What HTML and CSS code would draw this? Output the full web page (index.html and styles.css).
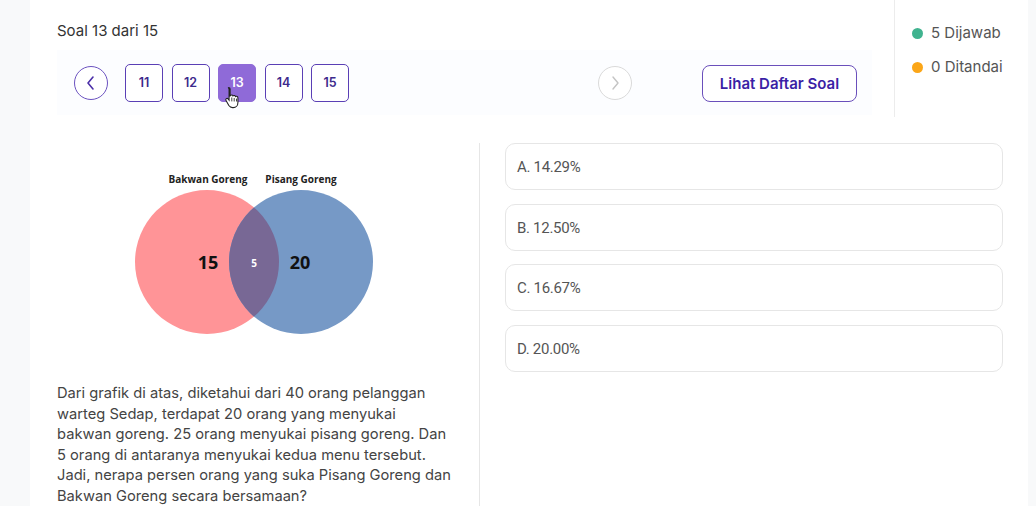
FILE: index.html
```html
<!DOCTYPE html>
<html lang="id">
<head>
<meta charset="utf-8">
<link rel="stylesheet" href="styles.css">
</head>
<body>
<div class="page">
  <div class="top">
    <div class="top-left">
      <div class="title">Soal 13 dari 15</div>
      <div class="pager">
        <button class="circ prev"><svg width="14" height="16" viewBox="0 0 14 16"><path d="M9 2 L4 8 L9 14" fill="none" stroke="#4b2fa8" stroke-width="1.6" stroke-linecap="round" stroke-linejoin="round"/></svg></button>
        <div class="pages">
          <button class="pg">11</button>
          <button class="pg">12</button>
          <button class="pg active">13</button>
          <button class="pg">14</button>
          <button class="pg">15</button>
        </div>
        <button class="circ next"><svg width="14" height="16" viewBox="0 0 14 16"><path d="M5 2 L10 8 L5 14" fill="none" stroke="#c4c4c4" stroke-width="1.4" stroke-linecap="round" stroke-linejoin="round"/></svg></button>
        <button class="list">Lihat Daftar Soal</button>
        <svg class="cursor" width="18" height="24" viewBox="0 0 16 22"><path d="M4 1.5c.8 0 1.4.6 1.4 1.4v6.2l.2-.1c.3-.6 1-.9 1.6-.7.4.1.7.4.8.8.4-.4 1-.5 1.5-.3.4.2.6.5.7.9.4-.3.9-.4 1.4-.2.6.2.9.8.9 1.4v4.2c0 2.6-1.8 4.7-4.3 4.7H7.6c-1.4 0-2.6-.7-3.4-1.9L1.6 13.3c-.4-.6-.2-1.3.3-1.7.5-.3 1.2-.2 1.6.3l.9 1.1V2.9C4.4 2.1 3.2 1.5 4 1.5z" fill="#fff" stroke="#222" stroke-width="1"/><path d="M6.9 10.5v3.6M9.1 11v3.2M11.2 11.6v2.6" stroke="#222" stroke-width=".8"/></svg>
      </div>
    </div>
    <div class="legend">
      <div class="lg"><span class="dot green"></span>5 Dijawab</div>
      <div class="lg"><span class="dot orange"></span>0 Ditandai</div>
    </div>
  </div>
  <div class="content">
    <div class="question">
      <svg class="venn" width="400" height="200" viewBox="0 0 400 200">
        <defs>
          <clipPath id="redclip"><circle cx="150" cy="112" r="72"/></clipPath>
        </defs>
        <text x="151" y="33" class="vlabel" text-anchor="middle">Bakwan Goreng</text>
        <text x="244" y="33" class="vlabel" text-anchor="middle">Pisang Goreng</text>
        <circle cx="150" cy="112" r="72" fill="#ff9497"/>
        <circle cx="244" cy="112" r="72" fill="#7699c6"/>
        <circle cx="244" cy="112" r="72" fill="#786895" clip-path="url(#redclip)"/>
        <text x="151" y="119" class="vnum" text-anchor="middle">15</text>
        <text x="197" y="117" class="vsmall" text-anchor="middle">5</text>
        <text x="243" y="119" class="vnum" text-anchor="middle">20</text>
      </svg>
      <p class="qtext">Dari grafik di atas, diketahui dari 40 orang pelanggan warteg Sedap, terdapat 20 orang yang menyukai bakwan goreng. 25 orang menyukai pisang goreng. Dan 5 orang di antaranya menyukai kedua menu tersebut. Jadi, nerapa persen orang yang suka Pisang Goreng dan Bakwan Goreng secara bersamaan?</p>
    </div>
    <div class="options">
      <div class="opt">A. 14.29%</div>
      <div class="opt">B. 12.50%</div>
      <div class="opt">C. 16.67%</div>
      <div class="opt">D. 20.00%</div>
    </div>
  </div>
</div>
</body>
</html>
```

FILE: styles.css
```css
* { box-sizing: border-box; }
html, body { margin: 0; padding: 0; }
body {
  background: #f8f9fa;
  font-family: Inter, "Noto Sans", sans-serif;
  height: 506px;
  overflow: hidden;
}
.page {
  margin-left: 30px;
  width: 998px;
  height: 506px;
  background: #fff;
}
.top {
  display: flex;
  height: 117px;
}
.top-left {
  width: 865px;
  border-right: 1px solid #ececec;
  padding-left: 27px;
  padding-top: 22px;
}
.title {
  font-size: 15px;
  color: #333;
  line-height: 18px;
}
.pager {
  position: relative;
  margin-top: 10px;
  width: 815px;
  height: 65px;
  background: #fcfdff;
  display: flex;
  align-items: center;
  padding-left: 17px;
}
button {
  font-family: inherit;
  cursor: pointer;
  padding: 0;
}
.circ {
  width: 34px;
  height: 34px;
  border-radius: 50%;
  background: #fff;
  display: flex;
  align-items: center;
  justify-content: center;
}
.prev { border: 1.5px solid #6b52c0; }
.next { border: 1.5px solid #dadada; margin-left: 249px; }
.pages {
  display: flex;
  gap: 8.5px;
  margin-left: 17px;
}
.pg {
  width: 38px;
  height: 38px;
  border: 1.5px solid #5a3fb5;
  border-radius: 5px;
  background: #fff;
  color: #3d2a8c;
  font-size: 12.5px;
  font-weight: 600;
}
.pg.active {
  background: #8f6ad8;
  border-color: #8f6ad8;
  color: #fff;
}
.list {
  margin-left: 70px;
  width: 155px;
  height: 37px;
  border: 1.5px solid #6a4fbb;
  border-radius: 8px;
  background: #fff;
  color: #3b1fa6;
  font-size: 15px;
  font-weight: 600;
  margin-top: 2px;
}
.cursor {
  position: absolute;
  left: 167px;
  top: 36px;
}
.legend {
  padding-left: 17px;
  padding-top: 24px;
  display: flex;
  flex-direction: column;
  gap: 16px;
}
.lg {
  display: flex;
  align-items: center;
  font-size: 15px;
  color: #555;
  line-height: 18px;
}
.dot {
  width: 11px;
  height: 11px;
  border-radius: 50%;
  margin-right: 8px;
}
.green { background: #40b38f; }
.orange { background: #fba618; }
.content {
  display: flex;
  margin-top: 26px;
}
.question {
  width: 450px;
  border-right: 1px solid #e6e6e6;
  height: 363px;
  padding-left: 27px;
}
.venn {
  display: block;
  margin-top: 7px;
}
.vlabel {
  font-family: "Open Sans", sans-serif;
  font-size: 10px;
  font-weight: 700;
  fill: #222;
}
.vnum {
  font-family: "Open Sans", sans-serif;
  font-size: 18px;
  font-weight: 700;
  fill: #111;
}
.vsmall {
  font-family: "Open Sans", sans-serif;
  font-size: 10px;
  font-weight: 700;
  fill: #fff;
}
.qtext {
  margin: 33px 0 0 0;
  width: 396px;
  font-size: 14.7px;
  line-height: 20.6px;
  color: #444;
}
.options {
  flex: 1;
  padding-left: 25px;
  padding-right: 25px;
  display: flex;
  flex-direction: column;
  gap: 13.5px;
}
.opt {
  height: 47px;
  border: 1px solid #e6e6e6;
  border-radius: 10px;
  padding-left: 11px;
  padding-top: 14px;
  font-family: Roboto, Inter, sans-serif;
  font-size: 15px;
  letter-spacing: -0.3px;
  color: #555;
  line-height: 18px;
}
```
